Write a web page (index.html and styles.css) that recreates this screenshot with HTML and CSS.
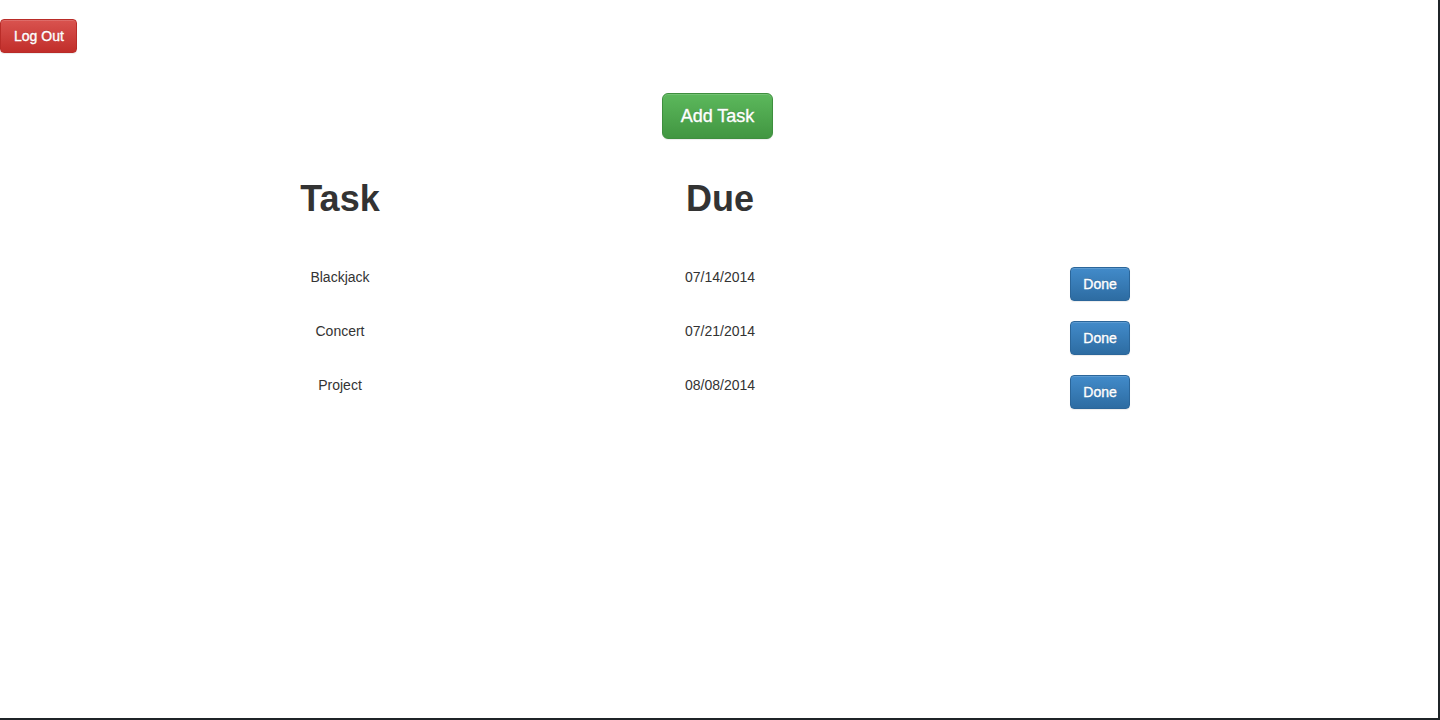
FILE: index.html
```html
<!DOCTYPE html>
<html>
<head>
<meta charset="utf-8">
<title>Tasks</title>
<link rel="stylesheet" href="styles.css">
</head>
<body>
<div class="frame">
  <div class="topbar">
    <button class="btn btn-danger">Log Out</button>
  </div>
  <div class="add-wrap">
    <button class="btn btn-success btn-lg">Add Task</button>
  </div>
  <div class="tasks">
    <div class="head">Task</div>
    <div class="head">Due</div>
    <div class="head"></div>

    <div class="cell">Blackjack</div>
    <div class="cell">07/14/2014</div>
    <div class="cell"><button class="btn btn-primary">Done</button></div>

    <div class="cell">Concert</div>
    <div class="cell">07/21/2014</div>
    <div class="cell"><button class="btn btn-primary">Done</button></div>

    <div class="cell">Project</div>
    <div class="cell">08/08/2014</div>
    <div class="cell"><button class="btn btn-primary">Done</button></div>
  </div>
</div>
</body>
</html>
```
FILE: styles.css
```css
html, body {
  margin: 0;
  padding: 0;
  height: 100%;
  background: #fff;
}
body {
  font-family: "Liberation Sans", Arial, sans-serif;
  font-size: 14px;
  line-height: 20px;
  color: #333;
}
.frame {
  box-sizing: border-box;
  height: 720px;
  border-right: 2px solid #1f2428;
  border-bottom: 2px solid #1f2428;
  overflow: hidden;
}
.topbar {
  padding-top: 19px;
}
.btn {
  display: inline-block;
  font-family: "Liberation Sans", Arial, sans-serif;
  font-size: 14px;
  line-height: 20px;
  padding: 6px 12px 6px 13px;
  border: 1px solid transparent;
  border-radius: 4px;
  color: #fff;
  cursor: pointer;
  -webkit-text-stroke: 0.35px #fff;
  text-shadow: 0 -1px 0 rgba(0,0,0,0.2);
  box-shadow: inset 0 1px 0 rgba(255,255,255,0.15), 0 1px 1px rgba(0,0,0,0.075);
}
.btn-danger {
  background: linear-gradient(to bottom, #d9534f 0%, #c12e2a 100%);
  border-color: #b92c28;
}
.btn-success {
  background: linear-gradient(to bottom, #5cb85c 0%, #419641 100%);
  border-color: #3e8f3e;
}
.btn-primary {
  background: linear-gradient(to bottom, #428bca 0%, #2d6ca2 100%);
  border-color: #2b669a;
  padding: 6px 12px;
}
.btn-lg {
  font-size: 18px;
  line-height: 24px;
  padding: 10px 18px;
  border-radius: 6px;
}
.add-wrap {
  display: flex;
  justify-content: center;
  padding-top: 40px;
  padding-right: 3px;
}
.tasks {
  display: grid;
  grid-template-columns: 200px 560px 200px;
  justify-content: center;
  margin-top: 20px;
  padding-left: 2px;
}
.head {
  text-align: center;
  font-size: 36px;
  font-weight: bold;
  line-height: 40px;
  padding: 20px 0 40px;
}
.cell {
  text-align: center;
  padding: 8px 0 12px;
}
```
